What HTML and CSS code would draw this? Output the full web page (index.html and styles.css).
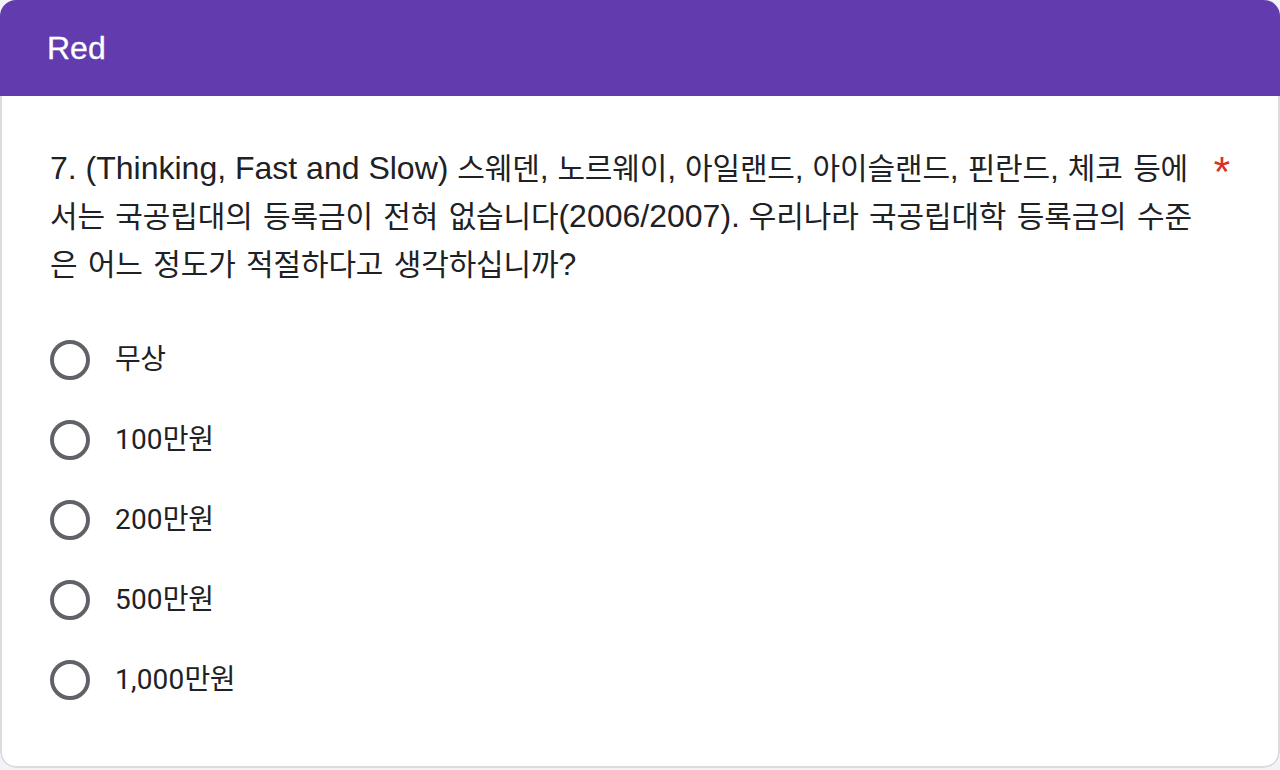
FILE: index.html
```html
<!DOCTYPE html>
<html lang="ko">
<head>
<meta charset="utf-8">
<title>Red</title>
<link rel="stylesheet" href="styles.css">
</head>
<body>
<div class="card">
  <div class="card-header">Red</div>
  <div class="card-body">
    <div class="question">
      <div class="q-title"><span>7. (Thinking, Fast and Slow) </span><span class="ko">스웨덴</span>, <span class="ko">노르웨이</span>, <span class="ko">아일랜드</span>, <span class="ko">아이슬랜드</span>, <span class="ko">핀란드</span>, <span class="ko">체코 등에서는 국공립대의 등록금이 전혀 없습니다</span>(2006/2007). <span class="ko">우리나라 국공립대학 등록금의 수준은 어느 정도가 적절하다고 생각하십니까</span>?</div>
      <div class="required">*</div>
    </div>
    <div class="options">
      <label class="option"><span class="radio"></span><span class="opt-text"><span class="ko-opt">무상</span></span></label>
      <label class="option"><span class="radio"></span><span class="opt-text">100<span class="ko-opt">만원</span></span></label>
      <label class="option"><span class="radio"></span><span class="opt-text">200<span class="ko-opt">만원</span></span></label>
      <label class="option"><span class="radio"></span><span class="opt-text">500<span class="ko-opt">만원</span></span></label>
      <label class="option"><span class="radio"></span><span class="opt-text">1,000<span class="ko-opt">만원</span></span></label>
    </div>
  </div>
</div>
</body>
</html>
```
FILE: styles.css
```css
html, body {
  margin: 0;
  padding: 0;
}
body {
  background: #f3f2f7;
  width: 1280px;
  height: 770px;
  overflow: hidden;
  font-family: "Liberation Sans", Arial, "Noto Sans CJK KR", sans-serif;
  color: #202124;
}
.card {
  width: 1280px;
  height: 768px;
  box-sizing: border-box;
  border-radius: 16px;
  overflow: hidden;
  display: flex;
  flex-direction: column;
  background: #fff;
}
.card-header {
  height: 96px;
  flex: none;
  background: #623cae;
  color: #fff;
  font-size: 32px;
  line-height: 96px;
  padding-left: 47px;
  -webkit-text-stroke: 0.3px #fff;
}
.card-body {
  flex: 1;
  border: 2px solid #dadce0;
  border-top: none;
  border-radius: 0 0 16px 16px;
  padding: 48px 48px 0 48px;
}
.question {
  display: flex;
  align-items: flex-start;
}
.q-title {
  width: 1150px;
  font-size: 32px;
  line-height: 48px;
  font-family: "Liberation Sans", Arial, "Noto Sans CJK KR", sans-serif;
}
.ko {
  font-family: "Noto Sans CJK KR", sans-serif;
  font-size: 30px;
  letter-spacing: -0.15px;
  word-spacing: 2.2px;
  line-height: 1;
}
.required {
  color: #d93025;
  font-size: 42px;
  line-height: 48px;
  margin-left: 15px;
  padding-top: 4px;
}
.options {
  margin-top: 32px;
  display: flex;
  flex-direction: column;
}
.option {
  height: 80px;
  display: flex;
  align-items: center;
  gap: 25px;
}
.radio {
  width: 40px;
  height: 40px;
  box-sizing: border-box;
  border: 4px solid #5f6368;
  border-radius: 50%;
  flex: none;
}
.opt-text {
  font-family: Roboto, "Noto Sans CJK KR", sans-serif;
  font-size: 28px;
  line-height: 40px;
  letter-spacing: 0.2px;
  color: #202124;
}
.ko-opt {
  font-family: "Noto Sans CJK KR", sans-serif;
  font-size: 28px;
  letter-spacing: -0.4px;
  line-height: 1;
}
```
